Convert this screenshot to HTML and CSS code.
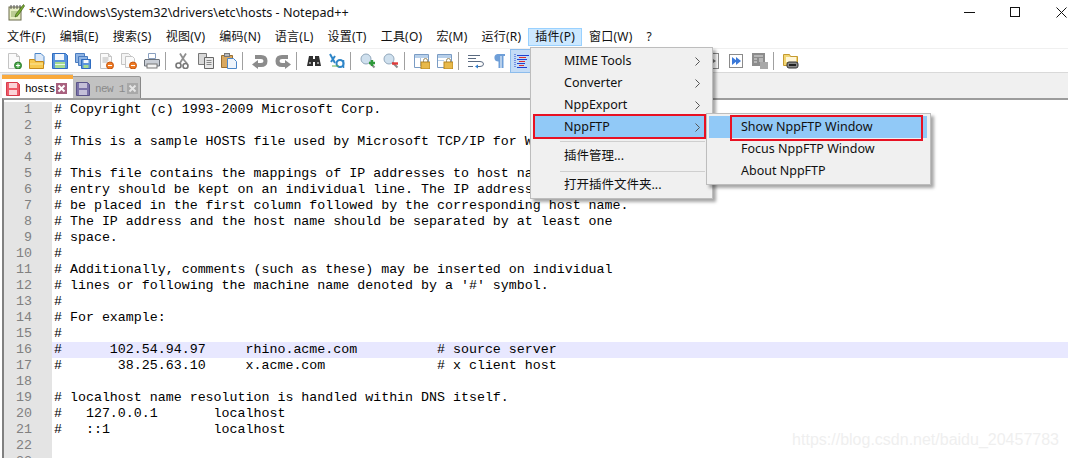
FILE: index.html
```html
<!DOCTYPE html>
<html lang="zh-CN">
<head>
<meta charset="utf-8">
<title>Notepad++</title>
<link rel="stylesheet" href="styles.css">
</head>
<body>
<svg class="defs" width="0" height="0" aria-hidden="true">
  <defs>
    <symbol id="floppy" viewBox="0 0 16 16">
      <path d="M.5.5h13l2 2v13H.5z" fill="#5a94dc" stroke="#2f6cc0"/>
      <rect x="3" y="1" width="9" height="6" fill="#f4f8fd"/>
      <rect x="3" y="9" width="10" height="6" fill="#a6dc90"/>
      <rect x="3" y="11" width="10" height="1" fill="#eef8e8"/>
    </symbol>
    <symbol id="page" viewBox="0 0 16 16">
      <path d="M2.500.5h8l3 3v12h-11z" fill="#fafafa" stroke="#c4c4c4"/>
      <path d="M10.500.5v3h3" fill="#e6e6e6" stroke="#c4c4c4"/>
    </symbol>
    <symbol id="x-mark" viewBox="0 0 11 11">
      <path d="M2.500 2.500l6 6M8.500 2.500l-6 6" stroke="currentColor" stroke-width="2"/>
    </symbol>
  </defs>
</svg>

<header class="titlebar">
  <svg class="app-icon" width="17" height="17" viewBox="0 0 17 17">
    <rect x="1" y="3" width="12" height="13" fill="#e8efc4" stroke="#6a6a4a"/>
    <path d="M3 1v4M6 1v4M9 1v4M12 1v4" stroke="#555" stroke-width="1"/>
    <path d="M3 8h8M3 10h8M3 12h7" stroke="#8fa860"/>
    <path d="M15.500 0.500L8 10l-1 3 3-1.500L16.500 2z" fill="#7cae32" stroke="#3c5f12" stroke-width=".7"/>
  </svg>
  <span class="title-text">*C:\Windows\System32\drivers\etc\hosts - Notepad++</span>
  <div class="win-buttons">
    <svg width="11" height="11" viewBox="0 0 11 11"><path d="M0 5.500h11" stroke="#111"/></svg>
    <svg width="11" height="11" viewBox="0 0 11 11"><rect x=".5" y=".5" width="9" height="9" fill="none" stroke="#111"/></svg>
    <svg width="11" height="11" viewBox="0 0 11 11"><path d="M.5.500l10 10M10.500.500l-10 10" stroke="#111"/></svg>
  </div>
</header>

<nav class="menubar">
  <span class="menu-item">文件(F)</span>
  <span class="menu-item">编辑(E)</span>
  <span class="menu-item">搜索(S)</span>
  <span class="menu-item">视图(V)</span>
  <span class="menu-item">编码(N)</span>
  <span class="menu-item">语言(L)</span>
  <span class="menu-item">设置(T)</span>
  <span class="menu-item">工具(O)</span>
  <span class="menu-item">宏(M)</span>
  <span class="menu-item">运行(R)</span>
  <span class="menu-item open">插件(P)</span>
  <span class="menu-item">窗口(W)</span>
  <span class="menu-item">?</span>
</nav>

<div class="toolbar">
  <svg class="tool" viewBox="0 0 16 16"><use href="#page"/><circle cx="12" cy="12.500" r="3.500" fill="#4aa84a" stroke="#2a7a2a"/><path d="M10 12.500h4M12 10.500v4" stroke="#fff"/></svg>
  <svg class="tool" viewBox="0 0 16 16"><path d="M6 .5h6l3 3v8H6z" fill="#dbe8f8" stroke="#4c86c8"/><path d="M.5 6.500h5l1 2h8v7H.5z" fill="#f7c94f" stroke="#c58a1c"/><path d="M1 11h13" stroke="#fbe6a0"/></svg>
  <svg class="tool" viewBox="0 0 16 16"><use href="#floppy"/></svg>
  <svg class="tool" viewBox="0 0 16 16"><path d="M.5.5h9v9h-9z" fill="#8fb4e4" stroke="#4a7cc0"/><path d="M3.500 3.500h9v9h-9z" fill="#8fb4e4" stroke="#4a7cc0"/><path d="M6.500 6.500h9v9h-9z" fill="#5a94dc" stroke="#2f6cc0"/><rect x="8.500" y="7" width="5" height="3" fill="#f4f8fd"/><rect x="8.500" y="12" width="5" height="3" fill="#a6dc90"/></svg>
  <svg class="tool" viewBox="0 0 16 16"><use href="#page"/><path d="M4.500 5h6M4.500 7h6M4.500 9h5" stroke="#b4b4b4"/><circle cx="12" cy="12.500" r="3.500" fill="#ee7a24" stroke="#c8560c"/><path d="M10 12.500h4" stroke="#fff"/></svg>
  <svg class="tool" viewBox="0 0 16 16"><path d="M.5.5h7l2 2v9h-9z" fill="#f4f4f4" stroke="#c4c4c4"/><path d="M4.500 3.500h7l2 2v9h-9z" fill="#fafafa" stroke="#c4c4c4"/><circle cx="12" cy="12.500" r="3.500" fill="#ee7a24" stroke="#c8560c"/><path d="M10 12.500h4" stroke="#fff"/></svg>
  <svg class="tool" viewBox="0 0 16 16"><path d="M4.500.5h7v5h-7z" fill="#fff" stroke="#8aa0c0"/><path d="M1 6.500h14q.5 0 .5.500v6H.5V7z" fill="#c9ced6" stroke="#6a7078"/><rect x="3" y="11" width="10" height="4" fill="#f4f4f4" stroke="#777"/></svg>
  <i class="sep"></i>
  <svg class="tool" viewBox="0 0 16 16"><path d="M11 .5L5 10M5 .5L9 7l3 3.500" fill="none" stroke="#8f8f8f" stroke-width="1.800"/><circle cx="3.500" cy="12.500" r="2.500" fill="none" stroke="#777" stroke-width="1.600"/><circle cx="10.500" cy="13" r="2.500" fill="none" stroke="#777" stroke-width="1.600"/></svg>
  <svg class="tool" viewBox="0 0 16 16"><path d="M.5.5h8v11h-8z" fill="#d8d8d8" stroke="#777"/><path d="M6.500 4.500h9v11h-9z" fill="#e8e8e8" stroke="#666"/><path d="M8.500 7.500h5M8.500 9.500h5M8.500 11.500h5" stroke="#888"/></svg>
  <svg class="tool" viewBox="0 0 16 16"><path d="M.5 2.500h11v12H.5z" fill="#d9a860" stroke="#9a6f30"/><rect x="3.500" y=".5" width="5" height="3" fill="#bbb" stroke="#777"/><path d="M6.500 5.500h6l3 3v7h-9z" fill="#eef4fb" stroke="#4c86c8"/></svg>
  <i class="sep"></i>
  <svg class="tool" viewBox="0 0 16 16"><path d="M3 4h6q4.500 0 4.500 4T9 12H3" fill="none" stroke="#8c8c8c" stroke-width="4"/><path d="M6 7v9L0 11.500z" fill="#8c8c8c"/></svg>
  <svg class="tool" viewBox="0 0 16 16"><path d="M13 4H7Q2.500 4 2.500 8T7 12h6" fill="none" stroke="#8c8c8c" stroke-width="4"/><path d="M10 7v9l6-4.500z" fill="#8c8c8c"/></svg>
  <i class="sep"></i>
  <svg class="tool" viewBox="0 0 16 16"><path d="M3 3h4v3h2V3h4l2 10H9V9H7v4H1z" fill="#2f2f2f"/><path d="M3 10h2M11 10h2" stroke="#999" stroke-width="2"/></svg>
  <svg class="tool" viewBox="0 0 16 16"><path d="M1 1l5 9M6 3L2 9" stroke="#2f86c8" stroke-width="2"/><circle cx="11" cy="10.500" r="3.500" fill="none" stroke="#2f86c8" stroke-width="2"/><path d="M14.500 7v8" stroke="#2f86c8" stroke-width="1.500"/><path d="M3 13h7" stroke="#60b050"/></svg>
  <i class="sep"></i>
  <svg class="tool" viewBox="0 0 16 16"><circle cx="6" cy="6" r="5" fill="#cfe0ee" stroke="#92a8bc"/><path d="M9.500 9.500l5 5" stroke="#8a8a8a" stroke-width="2"/><path d="M9 10h6M12 7v6" stroke="#2f9a3a" stroke-width="2.400"/></svg>
  <svg class="tool" viewBox="0 0 16 16"><circle cx="6" cy="6" r="5" fill="#cfe0ee" stroke="#92a8bc"/><path d="M9.500 9.500l5 5" stroke="#8a8a8a" stroke-width="2"/><path d="M9 10.500h6" stroke="#e03a3a" stroke-width="2.400"/></svg>
  <i class="sep"></i>
  <svg class="tool" viewBox="0 0 16 16"><path d="M.5 1.500h14v13H.5z" fill="#fff" stroke="#7a9cc4"/><path d="M1 2h13v3H1z" fill="#b8d0ea"/><path d="M6.500 5v8" stroke="#a8c0dc"/><rect x="7" y="9" width="9" height="7" fill="#e8b94a" stroke="#b58520"/><path d="M9.500 9V7.500a2 2 0 0 1 4 0V9" fill="none" stroke="#9a8a60"/></svg>
  <svg class="tool" viewBox="0 0 16 16"><path d="M.5 1.500h14v13H.5z" fill="#fff" stroke="#7a9cc4"/><path d="M1 2h13v3H1zM1 7h6v1H1z" fill="#b8d0ea"/><rect x="7" y="9" width="9" height="7" fill="#e8b94a" stroke="#b58520"/><path d="M9.500 9V7.500a2 2 0 0 1 4 0V9" fill="none" stroke="#9a8a60"/></svg>
  <i class="sep"></i>
  <svg class="tool" viewBox="0 0 16 16"><path d="M0 2.500h12M0 5.500h8M0 8.500h12q3.500 0 3.500 2.500t-3.500 2.500H8M0 13.500h5" fill="none" stroke="#5a6a80"/><path d="M10 11.500v4l-3-2z" fill="#2f7fd0"/></svg>
  <svg class="tool" viewBox="0 0 16 16"><path d="M6.500 1H14v2h-1.500v12h-2V3h-1v12h-2V8.500a4 3.800 0 0 1-1-7.500z" fill="#6f9fd8"/></svg>
  <svg class="tool active" viewBox="0 0 16 16"><path d="M1 1v14" stroke="#2040d0" stroke-dasharray="1 1"/><path d="M3 2.500h12M3 6.500h10M3 10.500h8M3 14.500h10" stroke="#2040d0"/><path d="M5 4.500h7M5 8.500h6M5 12.500h5" stroke="#e03030"/></svg>
  <svg class="tool after-menu" viewBox="0 0 16 16"><rect x=".5" y=".5" width="12" height="15" fill="#fff" stroke="#8a8a8a"/><path d="M4 4l6 4-6 4z" fill="#777"/></svg>
  <svg class="tool" viewBox="0 0 16 16"><rect x=".5" y="1.500" width="13" height="13" fill="#fff" stroke="#8a8a8a"/><path d="M3 4l5 4-5 4zM7 4l5 4-5 4z" fill="#3a78d8"/></svg>
  <svg class="tool" viewBox="0 0 16 16"><rect x="0" y="0" width="13" height="13" fill="#8c8c8c"/><path d="M2 3h9M2 6h3M2 9h3M7 6h4M7 8h4" stroke="#e0e0e0"/><rect x="8" y="9" width="8" height="7" fill="#a8a8a8"/></svg>
  <i class="sep"></i>
  <svg class="tool" viewBox="0 0 16 16"><path d="M.5 1.500h6l1 2h7v9H.5z" fill="#f2d674" stroke="#c59a30"/><path d="M3 4h10v5H3z" fill="#fff6d8"/><rect x="4" y="9" width="11" height="6" rx="2" fill="#8a8a8a" stroke="#333"/><path d="M6 12h7" stroke="#222" stroke-width="2"/></svg>
</div>

<div class="tabbar">
  <div class="tab current">
    <svg class="tab-icon" viewBox="0 0 14 14"><path d="M.5.5h11l2 2v11H.5z" fill="#ee5a68" stroke="#d83a4a"/><rect x="3" y="1" width="8" height="5" fill="#fbd4d8"/><rect x="3" y="8" width="8" height="5" fill="#fbd4d8"/></svg>
    <span class="tab-label">hosts</span>
    <svg class="tab-close" viewBox="0 0 11 11"><use href="#x-mark"/></svg>
  </div>
  <div class="tab other">
    <svg class="tab-icon" viewBox="0 0 14 14"><path d="M.5.5h11l2 2v11H.5z" fill="#7a72a8" stroke="#5a5488"/><rect x="3" y="1" width="8" height="5" fill="#c4c0d8"/><rect x="3" y="8" width="8" height="5" fill="#c4c0d8"/></svg>
    <span class="tab-label">new 1</span>
    <svg class="tab-close" viewBox="0 0 11 11"><use href="#x-mark"/></svg>
  </div>
</div>

<main class="editor">
  <div class="line"><span class="num">1</span><span class="code"># Copyright (c) 1993-2009 Microsoft Corp.</span></div>
  <div class="line"><span class="num">2</span><span class="code">#</span></div>
  <div class="line"><span class="num">3</span><span class="code"># This is a sample HOSTS file used by Microsoft TCP/IP for Windows.</span></div>
  <div class="line"><span class="num">4</span><span class="code">#</span></div>
  <div class="line"><span class="num">5</span><span class="code"># This file contains the mappings of IP addresses to host names. Each</span></div>
  <div class="line"><span class="num">6</span><span class="code"># entry should be kept on an individual line. The IP address should</span></div>
  <div class="line"><span class="num">7</span><span class="code"># be placed in the first column followed by the corresponding host name.</span></div>
  <div class="line"><span class="num">8</span><span class="code"># The IP address and the host name should be separated by at least one</span></div>
  <div class="line"><span class="num">9</span><span class="code"># space.</span></div>
  <div class="line"><span class="num">10</span><span class="code">#</span></div>
  <div class="line"><span class="num">11</span><span class="code"># Additionally, comments (such as these) may be inserted on individual</span></div>
  <div class="line"><span class="num">12</span><span class="code"># lines or following the machine name denoted by a '#' symbol.</span></div>
  <div class="line"><span class="num">13</span><span class="code">#</span></div>
  <div class="line"><span class="num">14</span><span class="code"># For example:</span></div>
  <div class="line"><span class="num">15</span><span class="code">#</span></div>
  <div class="line caret"><span class="num">16</span><span class="code">#      102.54.94.97     rhino.acme.com          # source server</span></div>
  <div class="line"><span class="num">17</span><span class="code">#       38.25.63.10     x.acme.com              # x client host</span></div>
  <div class="line"><span class="num">18</span><span class="code"></span></div>
  <div class="line"><span class="num">19</span><span class="code"># localhost name resolution is handled within DNS itself.</span></div>
  <div class="line"><span class="num">20</span><span class="code">#   127.0.0.1       localhost</span></div>
  <div class="line"><span class="num">21</span><span class="code">#   ::1             localhost</span></div>
  <div class="line"><span class="num">22</span><span class="code"></span></div>
  <div class="line"><span class="num">23</span><span class="code"></span></div>
</main>

<div class="popup plugins">
  <div class="pop-row">MIME Tools<svg class="chev" width="5" height="9" viewBox="0 0 5 9"><path d="M.5.500l4 4-4 4" fill="none" stroke="#555"/></svg></div>
  <div class="pop-row">Converter<svg class="chev" width="5" height="9" viewBox="0 0 5 9"><path d="M.5.500l4 4-4 4" fill="none" stroke="#555"/></svg></div>
  <div class="pop-row">NppExport<svg class="chev" width="5" height="9" viewBox="0 0 5 9"><path d="M.5.500l4 4-4 4" fill="none" stroke="#555"/></svg></div>
  <div class="pop-row hot marked">NppFTP<svg class="chev" width="5" height="9" viewBox="0 0 5 9"><path d="M.5.500l4 4-4 4" fill="none" stroke="#555"/></svg></div>
  <div class="pop-sep first"></div>
  <div class="pop-row">插件管理...</div>
  <div class="pop-sep second"></div>
  <div class="pop-row">打开插件文件夹...</div>
</div>

<div class="popup nppftp">
  <div class="pop-row hot marked">Show NppFTP Window</div>
  <div class="pop-row">Focus NppFTP Window</div>
  <div class="pop-row">About NppFTP</div>
</div>

<div class="watermark">https://blog.csdn.net/baidu_20457783</div>
</body>
</html>
```
FILE: styles.css
```css
* { box-sizing: border-box; }
html, body { margin: 0; padding: 0; }
body {
  position: relative;
  width: 1068px;
  height: 458px;
  overflow: hidden;
  background: #fff;
  color: #000;
  font-family: "Noto Sans", "Noto Sans CJK SC", sans-serif;
}
.defs { position: absolute; }

.titlebar { height: 28px; display: flex; align-items: center; padding: 0 0 3px 8px; }
.app-icon { flex: none; }
.title-text { margin-left: 4px; font-size: 12.6px; color: #111; white-space: nowrap; }
.win-buttons { margin-left: auto; display: flex; gap: 35px; padding-right: 1px; }

.menubar { height: 18px; display: flex; align-items: center; font-size: 12px; letter-spacing: .24px; color: #111; }
.menu-item { padding: 0 7px; line-height: 18px; white-space: nowrap; }
.menu-item.open { background: #cce8ff; box-shadow: inset 0 0 0 1px #99d1ff; }

.toolbar { margin-top: 2px; height: 25px; padding: 4px 0 0 6px; display: flex; align-items: flex-start; border-bottom: 1px solid #d9d9d9; border-top: 1px solid #f0f0f0; }
.tool { width: 16px; height: 16px; flex: none; margin-right: 7px; }
.tool.active { background: #c4dcf6; outline: 1px solid #8cbcec; outline-offset: 3px; box-shadow: 0 0 0 3px #c4dcf6; }
.tool.after-menu { margin-left: 169px; }
.sep { width: 1px; height: 18px; margin: -1px 9px 0 -2px; background: #a0a0a0; flex: none; }

.tabbar { height: 25px; background: #f0f0f0; display: flex; align-items: flex-end; padding-left: 2px; font-family: "Liberation Mono", monospace; }
.tab { display: flex; align-items: center; }
.tab.current { width: 71px; height: 24px; padding: 5px 0 1px 4px; background: #fff; border-top: 1px solid #c8c8c8; box-shadow: inset 0 4px 0 #faaa3c; }
.tab.other { width: 68px; height: 22px; padding: 2px 0 0 3px; background: #c2c2c2; border-top: 1px solid #999; border-right: 1px solid #888; color: #8a8a8a; border-radius: 0 2px 0 0; }
.tab-icon { width: 14px; height: 14px; flex: none; }
.tab-label { margin-left: 5px; width: 30px; flex: none; font-size: 11px; letter-spacing: -.65px; white-space: nowrap; }
.current .tab-label { color: #000; }
.tab-close { width: 11px; height: 11px; flex: none; margin-left: 1px; background: #a8607e; color: #fff; }
.other .tab-close { background: #a8a8a8; color: #e4e4e4; margin-left: 2px; }

.editor { margin-left: 2px; padding-top: 2px; border-top: 2px solid #9c9c9c; border-left: 2px solid #808080; height: 360px; overflow: hidden; font-family: "Liberation Mono", monospace; font-size: 13.3px; }
.line { display: flex; height: 16px; line-height: 16px; white-space: pre; }
.num { width: 48px; flex: none; background: #e4e4e4; color: #808080; text-align: right; padding-right: 20px; }
.code { flex: 1; padding-left: 2px; color: #000; }
.caret .code { background: #e8e8ff; }

.popup { position: absolute; background: #f0f0f0; border: 1px solid #bdbdbd; box-shadow: 3px 3px 3px rgba(0,0,0,.35); font-size: 12.5px; color: #111; }
.plugins { left: 530px; top: 47px; width: 183px; height: 152px; padding: 2px 7px 0 3px; }
.nppftp { left: 706px; top: 113px; width: 225px; height: 72px; padding: 2px 3px 0 2px; }
.pop-row { position: relative; height: 22px; line-height: 21px; padding-left: 30px; white-space: nowrap; }
.nppftp .pop-row { padding-left: 32px; }
.chev { position: absolute; right: 5px; top: 7px; }
.hot { background: #91c9f7; }
.marked::after { content: ""; position: absolute; border: 2px solid #e81123; }
.plugins .marked::after { left: -1px; right: -1px; top: -2px; bottom: -1px; }
.nppftp .marked::after { left: 21px; right: 4px; top: -1px; bottom: -3px; }
.pop-sep { height: 1px; margin-left: 26px; background: #cfcfcf; }
.pop-sep.first { margin-top: 3px; margin-bottom: 3px; }
.pop-sep.second { margin-top: 4px; margin-bottom: 2px; }

.watermark { position: absolute; right: 9px; bottom: 9px; font: 16px "Liberation Sans", sans-serif; color: #efefef; white-space: nowrap; }
```
